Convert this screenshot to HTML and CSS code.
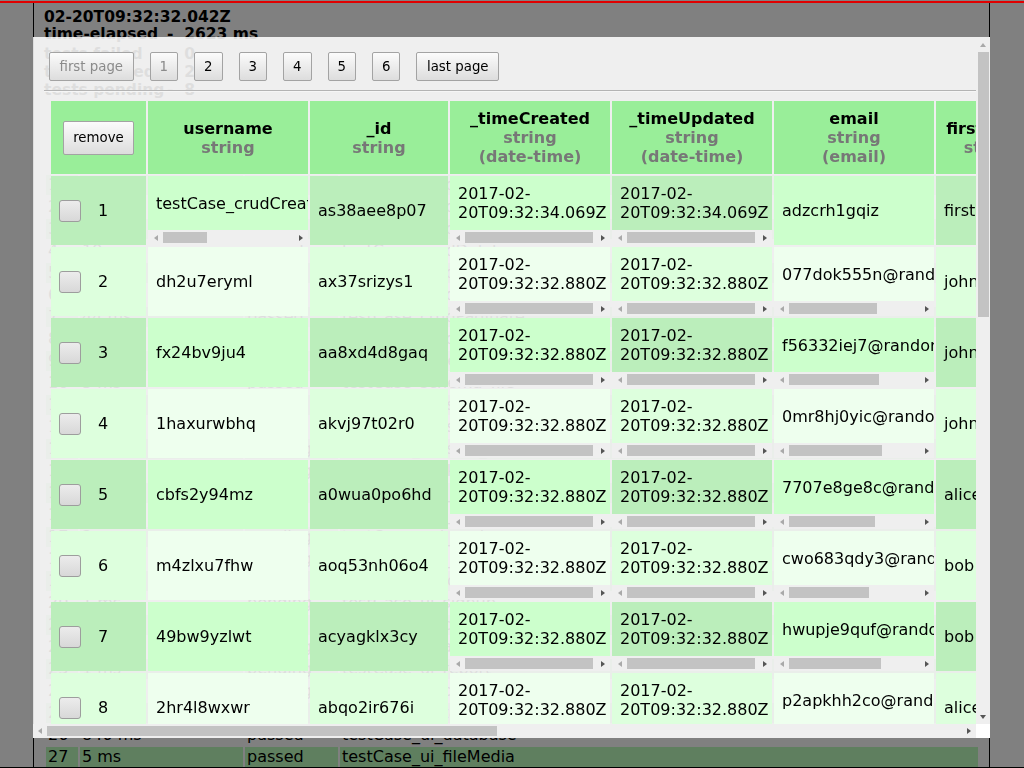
FILE: index.html
```html
<!DOCTYPE html>
<html>
<head>
<meta charset="utf-8">
<title>test report</title>
<link rel="stylesheet" href="styles.css">
</head>
<body>
<div class="strip"></div>
<div class="report">
  <div class="meta">
    <div class="ln">02-20T09:32:32.042Z</div>
    <div class="ln"><span class="lbl">time-elapsed</span>-  2623 ms</div>
  </div>
  <div class="meta stats">
    <div class="ln"><span class="lbl">tests failed</span>-  0</div>
    <div class="ln"><span class="lbl">tests passed</span>-  27</div>
    <div class="ln"><span class="lbl">tests pending</span>-  8</div>
  </div>
  <table class="runs">
    <colgroup><col class="r1"><col class="r2"><col class="r3"><col class="r4"></colgroup>
    <tbody>
      <tr class="g"><td>1</td><td>61 ms</td><td>passed</td><td>testCase_crudCreate</td></tr>
      <tr><td>2</td><td>24 ms</td><td>passed</td><td>testCase_crudRead</td></tr>
      <tr class="g"><td>3</td><td>31 ms</td><td>passed</td><td>testCase_crudUpdate</td></tr>
      <tr><td>4</td><td>19 ms</td><td>passed</td><td>testCase_crudDelete</td></tr>
      <tr class="g"><td>5</td><td>12 ms</td><td>passed</td><td>testCase_crudList</td></tr>
      <tr><td>6</td><td>8 ms</td><td>passed</td><td>testCase_crudSearch</td></tr>
      <tr class="g"><td>7</td><td>44 ms</td><td>passed</td><td>testCase_crudPaginate</td></tr>
      <tr><td>8</td><td>17 ms</td><td>passed</td><td>testCase_crudValidate</td></tr>
      <tr class="g"><td>9</td><td>6 ms</td><td>passed</td><td>testCase_schema_user</td></tr>
      <tr><td>10</td><td>5 ms</td><td>passed</td><td>testCase_schema_file</td></tr>
      <tr class="g"><td>11</td><td>93 ms</td><td>passed</td><td>testCase_session_login</td></tr>
      <tr><td>12</td><td>27 ms</td><td>passed</td><td>testCase_session_logout</td></tr>
      <tr class="g"><td>13</td><td>4 ms</td><td>pending</td><td>testCase_session_expire</td></tr>
      <tr><td>14</td><td>3 ms</td><td>pending</td><td>testCase_socket_connect</td></tr>
      <tr class="g"><td>15</td><td>38 ms</td><td>passed</td><td>testCase_api_user</td></tr>
      <tr><td>16</td><td>52 ms</td><td>passed</td><td>testCase_api_file</td></tr>
      <tr class="g"><td>17</td><td>2 ms</td><td>pending</td><td>testCase_api_cache</td></tr>
      <tr><td>18</td><td>2 ms</td><td>pending</td><td>testCase_api_upload</td></tr>
      <tr class="g"><td>19</td><td>71 ms</td><td>passed</td><td>testCase_ui_login</td></tr>
      <tr><td>20</td><td>1 ms</td><td>pending</td><td>testCase_ui_signup</td></tr>
      <tr class="g"><td>21</td><td>132 ms</td><td>passed</td><td>testCase_ui_crud</td></tr>
      <tr><td>22</td><td>1 ms</td><td>pending</td><td>testCase_ui_admin</td></tr>
      <tr class="g"><td>23</td><td>1 ms</td><td>pending</td><td>testCase_ui_report</td></tr>
      <tr><td>24</td><td>1 ms</td><td>pending</td><td>testCase_ui_chart</td></tr>
      <tr class="g"><td>25</td><td>210 ms</td><td>passed</td><td>testCase_ui_table</td></tr>
      <tr><td>26</td><td>846 ms</td><td>passed</td><td>testCase_ui_database</td></tr>
      <tr class="g"><td>27</td><td>5 ms</td><td>passed</td><td>testCase_ui_fileMedia</td></tr>
    </tbody>
  </table>
</div>

<div class="modal">
  <div class="view">
    <div class="pager">
      <button class="btn off">first page</button>
      <button class="btn num off">1</button>
      <button class="btn num">2</button>
      <button class="btn num">3</button>
      <button class="btn num">4</button>
      <button class="btn num">5</button>
      <button class="btn num">6</button>
      <button class="btn">last page</button>
    </div>
    <hr class="sep">
    <table class="grid">
      <colgroup>
        <col class="w0"><col class="w1"><col class="w2"><col class="w3"><col class="w4"><col class="w5"><col class="w6">
      </colgroup>
      <thead>
        <tr>
          <th><button class="btn rm">remove</button></th>
          <th>username<br><span class="t">string</span></th>
          <th>_id<br><span class="t">string</span></th>
          <th>_timeCreated<br><span class="t">string<br>(date-time)</span></th>
          <th>_timeUpdated<br><span class="t">string<br>(date-time)</span></th>
          <th>email<br><span class="t">string<br>(email)</span></th>
          <th>firstName<br><span class="t">string</span></th>
        </tr>
      </thead>
      <tbody>
        <tr class="o">
          <td><div class="c"><input type="checkbox" class="chk"><span>1</span></div></td>
          <td><div class="s"><div class="c">testCase_crudCreateUser_2017-02-20T09:32:34.069Z</div><div class="hb"><span class="ab"><i class="al"></i></span><span class="trk"><i class="thm" style="width:44px"></i></span><span class="ab"><i class="ar"></i></span></div></div></td>
          <td><div class="c">as38aee8p07</div></td>
          <td><div class="s"><div class="c"><span>2017-02-<br>20T09:32:34.069Z</span></div><div class="hb"><span class="ab"><i class="al"></i></span><span class="trk"><i class="thm" style="width:128px"></i></span><span class="ab"><i class="ar"></i></span></div></div></td>
          <td><div class="s"><div class="c"><span>2017-02-<br>20T09:32:34.069Z</span></div><div class="hb"><span class="ab"><i class="al"></i></span><span class="trk"><i class="thm" style="width:128px"></i></span><span class="ab"><i class="ar"></i></span></div></div></td>
          <td><div class="c">adzcrh1gqiz</div></td>
          <td><div class="c">first</div></td>
        </tr>
        <tr class="e">
          <td><div class="c"><input type="checkbox" class="chk"><span>2</span></div></td>
          <td><div class="c">dh2u7eryml</div></td>
          <td><div class="c">ax37srizys1</div></td>
          <td><div class="s"><div class="c"><span>2017-02-<br>20T09:32:32.880Z</span></div><div class="hb"><span class="ab"><i class="al"></i></span><span class="trk"><i class="thm" style="width:128px"></i></span><span class="ab"><i class="ar"></i></span></div></div></td>
          <td><div class="s"><div class="c"><span>2017-02-<br>20T09:32:32.880Z</span></div><div class="hb"><span class="ab"><i class="al"></i></span><span class="trk"><i class="thm" style="width:128px"></i></span><span class="ab"><i class="ar"></i></span></div></div></td>
          <td><div class="s"><div class="c">077dok555n@randomemail.com</div><div class="hb"><span class="ab"><i class="al"></i></span><span class="trk"><i class="thm" style="width:88px"></i></span><span class="ab"><i class="ar"></i></span></div></div></td>
          <td><div class="c">john</div></td>
        </tr>
        <tr class="o">
          <td><div class="c"><input type="checkbox" class="chk"><span>3</span></div></td>
          <td><div class="c">fx24bv9ju4</div></td>
          <td><div class="c">aa8xd4d8gaq</div></td>
          <td><div class="s"><div class="c"><span>2017-02-<br>20T09:32:32.880Z</span></div><div class="hb"><span class="ab"><i class="al"></i></span><span class="trk"><i class="thm" style="width:128px"></i></span><span class="ab"><i class="ar"></i></span></div></div></td>
          <td><div class="s"><div class="c"><span>2017-02-<br>20T09:32:32.880Z</span></div><div class="hb"><span class="ab"><i class="al"></i></span><span class="trk"><i class="thm" style="width:128px"></i></span><span class="ab"><i class="ar"></i></span></div></div></td>
          <td><div class="s"><div class="c">f56332iej7@randomemail.com</div><div class="hb"><span class="ab"><i class="al"></i></span><span class="trk"><i class="thm" style="width:90px"></i></span><span class="ab"><i class="ar"></i></span></div></div></td>
          <td><div class="c">john</div></td>
        </tr>
        <tr class="e">
          <td><div class="c"><input type="checkbox" class="chk"><span>4</span></div></td>
          <td><div class="c">1haxurwbhq</div></td>
          <td><div class="c">akvj97t02r0</div></td>
          <td><div class="s"><div class="c"><span>2017-02-<br>20T09:32:32.880Z</span></div><div class="hb"><span class="ab"><i class="al"></i></span><span class="trk"><i class="thm" style="width:128px"></i></span><span class="ab"><i class="ar"></i></span></div></div></td>
          <td><div class="s"><div class="c"><span>2017-02-<br>20T09:32:32.880Z</span></div><div class="hb"><span class="ab"><i class="al"></i></span><span class="trk"><i class="thm" style="width:128px"></i></span><span class="ab"><i class="ar"></i></span></div></div></td>
          <td><div class="s"><div class="c">0mr8hj0yic@randomemail.com</div><div class="hb"><span class="ab"><i class="al"></i></span><span class="trk"><i class="thm" style="width:93px"></i></span><span class="ab"><i class="ar"></i></span></div></div></td>
          <td><div class="c">john</div></td>
        </tr>
        <tr class="o">
          <td><div class="c"><input type="checkbox" class="chk"><span>5</span></div></td>
          <td><div class="c">cbfs2y94mz</div></td>
          <td><div class="c">a0wua0po6hd</div></td>
          <td><div class="s"><div class="c"><span>2017-02-<br>20T09:32:32.880Z</span></div><div class="hb"><span class="ab"><i class="al"></i></span><span class="trk"><i class="thm" style="width:128px"></i></span><span class="ab"><i class="ar"></i></span></div></div></td>
          <td><div class="s"><div class="c"><span>2017-02-<br>20T09:32:32.880Z</span></div><div class="hb"><span class="ab"><i class="al"></i></span><span class="trk"><i class="thm" style="width:128px"></i></span><span class="ab"><i class="ar"></i></span></div></div></td>
          <td><div class="s"><div class="c">7707e8ge8c@randomemail.com</div><div class="hb"><span class="ab"><i class="al"></i></span><span class="trk"><i class="thm" style="width:86px"></i></span><span class="ab"><i class="ar"></i></span></div></div></td>
          <td><div class="c">alice</div></td>
        </tr>
        <tr class="e">
          <td><div class="c"><input type="checkbox" class="chk"><span>6</span></div></td>
          <td><div class="c">m4zlxu7fhw</div></td>
          <td><div class="c">aoq53nh06o4</div></td>
          <td><div class="s"><div class="c"><span>2017-02-<br>20T09:32:32.880Z</span></div><div class="hb"><span class="ab"><i class="al"></i></span><span class="trk"><i class="thm" style="width:128px"></i></span><span class="ab"><i class="ar"></i></span></div></div></td>
          <td><div class="s"><div class="c"><span>2017-02-<br>20T09:32:32.880Z</span></div><div class="hb"><span class="ab"><i class="al"></i></span><span class="trk"><i class="thm" style="width:128px"></i></span><span class="ab"><i class="ar"></i></span></div></div></td>
          <td><div class="s"><div class="c">cwo683qdy3@randomemail.com</div><div class="hb"><span class="ab"><i class="al"></i></span><span class="trk"><i class="thm" style="width:80px"></i></span><span class="ab"><i class="ar"></i></span></div></div></td>
          <td><div class="c">bob</div></td>
        </tr>
        <tr class="o">
          <td><div class="c"><input type="checkbox" class="chk"><span>7</span></div></td>
          <td><div class="c">49bw9yzlwt</div></td>
          <td><div class="c">acyagklx3cy</div></td>
          <td><div class="s"><div class="c"><span>2017-02-<br>20T09:32:32.880Z</span></div><div class="hb"><span class="ab"><i class="al"></i></span><span class="trk"><i class="thm" style="width:128px"></i></span><span class="ab"><i class="ar"></i></span></div></div></td>
          <td><div class="s"><div class="c"><span>2017-02-<br>20T09:32:32.880Z</span></div><div class="hb"><span class="ab"><i class="al"></i></span><span class="trk"><i class="thm" style="width:128px"></i></span><span class="ab"><i class="ar"></i></span></div></div></td>
          <td><div class="s"><div class="c">hwupje9quf@randomemail.com</div><div class="hb"><span class="ab"><i class="al"></i></span><span class="trk"><i class="thm" style="width:92px"></i></span><span class="ab"><i class="ar"></i></span></div></div></td>
          <td><div class="c">bob</div></td>
        </tr>
        <tr class="e">
          <td><div class="c"><input type="checkbox" class="chk"><span>8</span></div></td>
          <td><div class="c">2hr4l8wxwr</div></td>
          <td><div class="c">abqo2ir676i</div></td>
          <td><div class="s"><div class="c"><span>2017-02-<br>20T09:32:32.880Z</span></div><div class="hb"><span class="ab"><i class="al"></i></span><span class="trk"><i class="thm" style="width:128px"></i></span><span class="ab"><i class="ar"></i></span></div></div></td>
          <td><div class="s"><div class="c"><span>2017-02-<br>20T09:32:32.880Z</span></div><div class="hb"><span class="ab"><i class="al"></i></span><span class="trk"><i class="thm" style="width:128px"></i></span><span class="ab"><i class="ar"></i></span></div></div></td>
          <td><div class="s"><div class="c">p2apkhh2co@randomemail.com</div><div class="hb"><span class="ab"><i class="al"></i></span><span class="trk"><i class="thm" style="width:88px"></i></span><span class="ab"><i class="ar"></i></span></div></div></td>
          <td><div class="c">alice</div></td>
        </tr>
      </tbody>
    </table>
  </div>
  <div class="mv">
    <span class="ab"><i class="au"></i></span>
    <span class="trk"><i class="thm"></i></span>
    <span class="ab"><i class="ad"></i></span>
  </div>
  <div class="mh">
    <span class="ab"><i class="al"></i></span>
    <span class="trk"><i class="thm"></i></span>
    <span class="ab"><i class="ar"></i></span>
  </div>
  <div class="corner"></div>
</div>
</body>
</html>
```
FILE: styles.css
```css
* { box-sizing: border-box; }
html, body { margin: 0; padding: 0; }
body {
  height: 768px;
  overflow: hidden;
  background: #808080;
  color: #000;
  font-family: "DejaVu Sans", "Liberation Sans", sans-serif;
  border-bottom: 1px solid #000;
  display: flex;
  flex-direction: column;
}

/* page behind the dialog */
.strip { flex: none; height: 3px; border-bottom: 2px solid #e00000; }
.report {
  flex: 1;
  min-height: 0;
  width: 957px;
  margin-left: 33px;
  border-left: 1px solid #000;
  border-right: 1px solid #000;
  padding: 6px 0 0 10px;
  overflow: hidden;
}
.meta { font-weight: bold; font-size: 15.5px; line-height: 17px; }
.ln { white-space: pre; }
.stats { margin-top: 2px; line-height: 18px; }
.lbl { display: inline-block; width: 123px; }

.runs {
  margin-top: 74px;
  border-spacing: 2px;
  table-layout: fixed;
  width: 936px;
  font-size: 16px;
}
.runs .r1 { width: 32px; }
.runs .r2 { width: 163px; }
.runs .r3 { width: 93px; }
.runs .r4 { width: 638px; }
.runs td { height: 20px; padding: 0 2px; line-height: 20px; white-space: nowrap; overflow: hidden; }
.runs tr.g td { background: #5f7f5f; }

/* dialog */
.modal {
  position: fixed;
  left: 33px;
  top: 37px;
  width: 957px;
  height: 701px;
  display: grid;
  grid-template-columns: minmax(0, 1fr) 14px;
  grid-template-rows: minmax(0, 1fr) 14px;
  background: rgba(255, 255, 255, 0.87);
}
.view { overflow: hidden; padding: 15px 0 0 11px; }

.pager { display: flex; align-items: flex-start; gap: 16px; padding-left: 5px; }
.btn {
  font-family: "DejaVu Sans", "Liberation Sans", sans-serif;
  font-size: 13.333px;
  height: 29px;
  margin: 0;
  padding: 0 9.5px;
  color: #000;
  border: 1px solid #a3a3a3;
  border-radius: 2px;
  background: linear-gradient(#fbfbfb, #dddddd);
  white-space: nowrap;
}
.btn.num { padding: 0 9px; }
.btn.off { color: #8b8b8b; }
.btn.rm { height: 34px; padding: 0 9px; }

.sep {
  margin: 9px 0 7px;
  height: 0;
  border: 0;
  border-top: 1px solid #b4b4b4;
  border-bottom: 1px solid #f6f6f6;
}

.grid {
  margin-left: 5px;
  border-spacing: 2px;
  table-layout: fixed;
  width: 998px;
  font-size: 16px;
  line-height: 19px;
}
.grid .w0 { width: 95px; }
.grid .w1 { width: 160px; }
.grid .w2 { width: 138px; }
.grid .w3 { width: 160px; }
.grid .w4 { width: 160px; }
.grid .w5 { width: 160px; }
.grid .w6 { width: 109px; }
.grid thead tr { height: 73px; }
.grid th {
  background: #99ee99;
  padding: 8px;
  text-align: center;
  vertical-align: middle;
  font-weight: bold;
  white-space: nowrap;
  overflow: hidden;
}
.grid th .t { color: #777; }
.grid td { padding: 0; vertical-align: top; }
.grid tr.o td:nth-child(odd) { background: #bbeebb; }
.grid tr.o td:nth-child(even) { background: #ccffcc; }
.grid tr.e td:nth-child(odd) { background: #ddffdd; }
.grid tr.e td:nth-child(even) { background: #eeffee; }

.c {
  height: 69px;
  display: flex;
  align-items: center;
  padding: 0 8px;
  overflow: hidden;
  white-space: nowrap;
}
.s { height: 69px; display: flex; flex-direction: column; }
.s .c { height: auto; flex: 1; min-height: 0; }

.chk {
  appearance: none;
  -webkit-appearance: none;
  flex: none;
  width: 22px;
  height: 22px;
  margin: 0 17px 0 0;
  border: 1px solid #9d9d9d;
  border-radius: 3px;
  background: linear-gradient(#ececec, #d8d8d8);
}

/* scrollbars */
.hb { flex: none; display: flex; height: 15px; background: #efefef; }
.hb .ab { flex: none; width: 15px; display: flex; align-items: center; justify-content: center; }
.trk { flex: 1; display: block; }
.thm { display: block; background: #c3c3c3; }
.hb .thm { height: 11px; margin-top: 2px; }

.al, .ar, .au, .ad { display: block; width: 0; height: 0; border-style: solid; }
.al { border-width: 3px 4px 3px 0; border-color: transparent #a9a9a9 transparent transparent; }
.ar { border-width: 3px 0 3px 4px; border-color: transparent transparent transparent #555; }
.au { border-width: 0 3px 4px 3px; border-color: transparent transparent #a9a9a9 transparent; }
.ad { border-width: 4px 3px 0 3px; border-color: #555 transparent transparent transparent; }

.mv { display: flex; flex-direction: column; background: #efefef; }
.mv .ab { flex: none; height: 15px; display: flex; align-items: center; justify-content: center; }
.mv .thm { width: 11px; height: 265px; margin-left: 2px; }

.mh { display: flex; background: #efefef; }
.mh .ab { flex: none; width: 14px; display: flex; align-items: center; justify-content: center; }
.mh .thm { width: 450px; height: 10px; margin-top: 2px; }

.corner { background: #fff; }
```
